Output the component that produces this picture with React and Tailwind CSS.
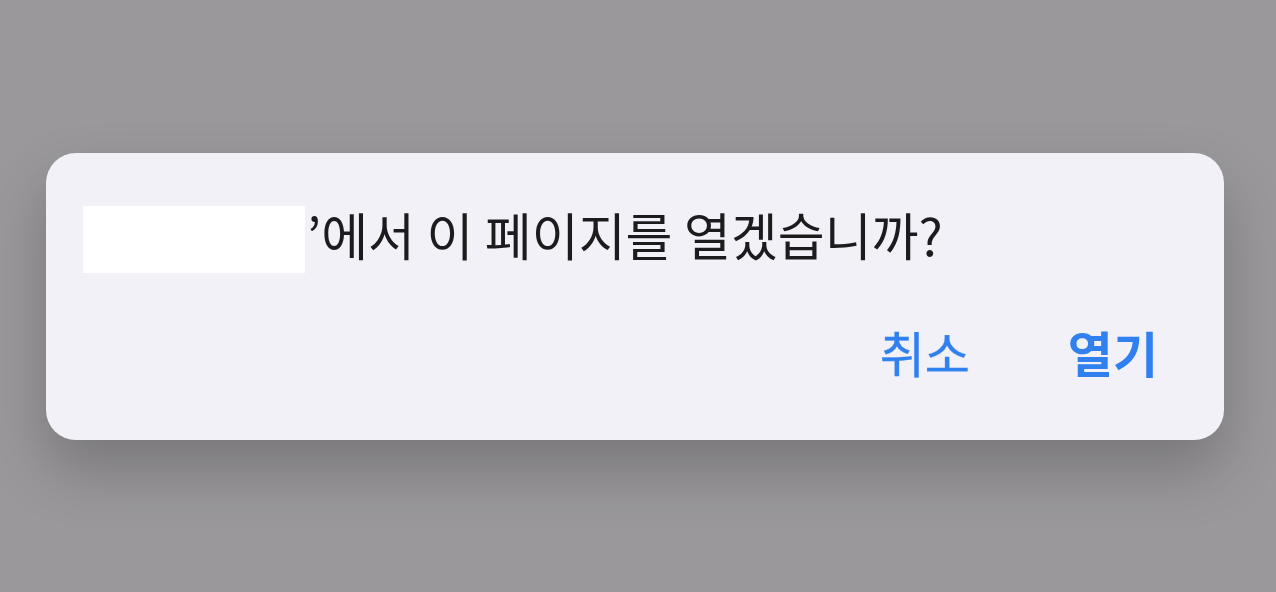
export default function App() {
  const font = { fontFamily: '"Noto Sans CJK KR", "Noto Sans", sans-serif' };
  return (
    <div className="w-[1276px] h-[592px] bg-[#9a989b] overflow-hidden pt-[153px] pl-[46px]" style={font}>
      <div className="w-[1178px] h-[287px] rounded-[30px] bg-[#f2f1f7] shadow-[0_30px_60px_rgba(0,0,0,0.22)] flex flex-col">
        <div className="flex items-center pl-[37px] pt-[53px]">
          <div className="w-[222px] h-[67px] bg-white" />
          <span className="ml-[2px] mb-[10px] text-[51px] leading-none text-[#1c1c1e] font-normal">’에서 이 페이지를 열겠습니까?</span>
        </div>
        <div className="flex justify-end items-center pr-[66px] mt-[54px] gap-[98px]">
          <span className="text-[49px] leading-none text-[#3080ef] font-normal [-webkit-text-stroke:0.4px_#3080ef]">취소</span>
          <span className="text-[49px] leading-none text-[#3080ef] font-bold">열기</span>
        </div>
      </div>
    </div>
  );
}
